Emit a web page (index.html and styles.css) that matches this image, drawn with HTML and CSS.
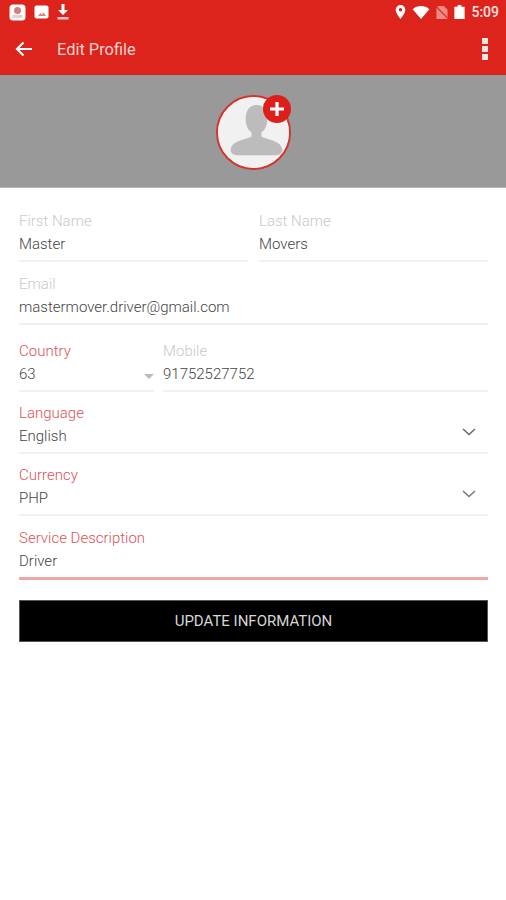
FILE: index.html
```html
<!DOCTYPE html>
<html lang="en">
<head>
  <meta charset="UTF-8" />
  <title>Edit Profile</title>
  <link rel="stylesheet" href="styles.css">
</head>
<body>
  <div class="header">
    <!-- Status bar -->
    <div class="status-bar">
      <div class="status-group">
        <svg class="ic" width="17" height="17" viewBox="0 0 17 17"><rect x="0.5" y="0.5" width="16" height="16" rx="3.5" fill="#fff"/><circle cx="8.500" cy="6.500" r="3.500" fill="#d77c80"/><rect x="3.500" y="11" width="10" height="3" fill="#eccdcf"/></svg>
        <svg class="ic" width="15" height="14" viewBox="0 0 15 14"><rect x="0.5" y="0.5" width="14" height="13" rx="2" fill="#fff"/><path d="M4 11l2.500-3 1.500 1.500 1.500-2 2.500 3.500z" fill="#d9827f"/></svg>
        <svg class="ic" width="12" height="16" viewBox="0 0 12 16"><path d="M4.500 0h3v6H11L6 11 1 6h3.500z" fill="#fff"/><rect x="0.500" y="13" width="11" height="2.500" fill="#f7c9c6"/></svg>
      </div>
      <div class="status-group right">
        <svg class="ic" width="11" height="14" viewBox="0 0 12 16"><path fill-rule="evenodd" d="M6 0a5.500 5.500 0 0 1 5.500 5.500C11.500 9.500 6 16 6 16S.5 9.500.5 5.500A5.500 5.500 0 0 1 6 0zm0 3.500a2 2 0 1 0 0 4 2 2 0 0 0 0-4z" fill="#fff"/></svg>
        <svg class="ic" width="18" height="13" viewBox="0 0 18 14"><path d="M0 3.500C5-1 13-1 18 3.500L9 14z" fill="#fff"/></svg>
        <svg class="ic sim" width="12" height="13" viewBox="0 0 12 14"><path d="M2 0h6l4 4v10H0V2z" fill="#ee8a84"/><path d="M0 1l12 12" stroke="#dc241c" stroke-width="1.200"/></svg>
        <svg class="ic" width="11" height="14" viewBox="0 0 11 15"><path d="M3.500 0h4v2H11v13H0V2h3.500z" fill="#fff"/></svg>
        <span class="clock">5:09</span>
      </div>
    </div>
    <!-- Toolbar -->
    <div class="toolbar">
      <svg class="back" width="18" height="16" viewBox="0 0 18 16"><path d="M17 8H2.500M8.500 1.500L2 8l6.500 6.500" fill="none" stroke="#fff" stroke-width="2.200"/></svg>
      <span class="title">Edit Profile</span>
      <div class="menu"><i></i><i></i><i></i></div>
    </div>
  </div>

  <div class="banner">
    <div class="avatar">
      <svg width="71" height="71" viewBox="0 0 72 72">
        <circle cx="36" cy="36" r="36" fill="#f1f1f1"/>
        <path d="M39 8c-7 0-11 6-11 14 0 6 2 11 6 14v4c-5 3-19 4-21 12-1 4 2 7 6 7h40c4 0 7-3 6-7-2-8-16-9-21-12v-4c4-3 6-8 6-14 0-8-4-14-11-14z" fill="#bcbcbc"/>
      </svg>
      <span class="plus">
        <svg width="16" height="16" viewBox="0 0 16 16"><path d="M8 1v14M1 8h14" stroke="#fff" stroke-width="3.200"/></svg>
      </span>
    </div>
  </div>

  <form class="form">
    <div class="row">
      <div class="field grow">
        <label>First Name</label>
        <div class="value">Master</div>
      </div>
      <div class="field grow">
        <label>Last Name</label>
        <div class="value">Movers</div>
      </div>
    </div>
    <div class="field">
      <label>Email</label>
      <div class="value">mastermover.driver@gmail.com</div>
    </div>
    <div class="row tight phone-row">
      <div class="field country">
        <label class="red">Country</label>
        <div class="value spread">63<span class="caret"></span></div>
      </div>
      <div class="field grow">
        <label>Mobile</label>
        <div class="value">91752527752</div>
      </div>
    </div>
    <div class="field pull-up">
      <label class="red">Language</label>
      <div class="value spread">English
        <svg class="chev" width="14" height="8" viewBox="0 0 14 8"><path d="M1 1l6 5.500L13 1" fill="none" stroke="#666" stroke-width="1.500"/></svg>
      </div>
    </div>
    <div class="field pull-up">
      <label class="red">Currency</label>
      <div class="value spread">PHP
        <svg class="chev" width="14" height="8" viewBox="0 0 14 8"><path d="M1 1l6 5.500L13 1" fill="none" stroke="#777" stroke-width="1.500"/></svg>
      </div>
    </div>
    <div class="field focused">
      <label class="red">Service Description</label>
      <div class="value">Driver</div>
    </div>
    <button class="submit" type="button">UPDATE INFORMATION</button>
  </form>
</body>
</html>
```

FILE: styles.css
```css
/* Reset */
* {
  margin: 0; padding: 0; box-sizing: border-box;
}
html, body {
  height: 100%;
  background: #fff;
  font-family: Roboto, "Liberation Sans", sans-serif;
  overflow: hidden;
}

/* Header */
.header {
  background: #dc241c;
  height: 75px;
  border-bottom: 1px solid #c9261e;
}
.status-bar {
  height: 27px;
  display: flex;
  justify-content: space-between;
  align-items: center;
  padding: 0 7px 3px 9px;
}
.status-group {
  display: flex;
  align-items: center;
  gap: 8px;
}
.status-group.right {
  gap: 6px;
}
.clock {
  color: #fce4e2;
  font-size: 14px;
  font-weight: 500;
}
.toolbar {
  height: 47px;
  display: flex;
  align-items: center;
  padding: 0 18px 3px 15px;
}
.back {
  margin-right: 24px;
}
.title {
  color: #f9d2cf;
  font-size: 16.400px;
  flex: 1;
}
.menu {
  display: flex;
  flex-direction: column;
  gap: 2px;
}
.menu i {
  display: block;
  width: 6px;
  height: 6px;
  background: #fbe3e1;
}

/* Banner with avatar */
.banner {
  height: 113px;
  background: #999;
  border-bottom: 1px solid #b5b5b5;
  display: flex;
  justify-content: center;
  padding-top: 20px;
}
.avatar {
  position: relative;
  width: 75px;
  height: 75px;
  border: 2px solid #d8322b;
  border-radius: 50%;
  background: #f1f1f1;
}
.avatar > svg {
  display: block;
  border-radius: 50%;
}
.plus {
  position: absolute;
  top: -2px;
  right: -2px;
  width: 28px;
  height: 28px;
  border-radius: 50%;
  background: #dc1f1a;
  display: flex;
  align-items: center;
  justify-content: center;
}

/* Form */
.form {
  padding: 24px 18px 0 19px;
  display: flex;
  flex-direction: column;
  gap: 13px;
}
.row {
  display: flex;
  gap: 11px;
}
.row.tight {
  gap: 9px;
}
.phone-row {
  margin-top: 4px;
}
.pull-up {
  margin-top: -1px;
}
.grow {
  flex: 1;
}
.country {
  width: 135px;
}
.field {
  border-bottom: 2px solid #f0f0f0;
  height: 50px;
}
.field label {
  display: block;
  height: 18px;
  line-height: 18px;
  font-size: 15px;
  font-weight: 300;
  color: #c8c8c8;
}
.field label.red {
  color: #dc5257;
}
.value {
  margin-top: 5px;
  height: 18px;
  line-height: 18px;
  font-size: 15px;
  font-weight: 300;
  color: #444;
}
.spread {
  display: flex;
  justify-content: space-between;
  align-items: center;
}
.chev {
  margin: -9px 12px 0 0;
}
.caret {
  width: 0;
  height: 0;
  border-left: 5px solid transparent;
  border-right: 5px solid transparent;
  border-top: 5px solid #bbb;
  margin-top: 4px;
}
.focused {
  border-bottom: 3px solid #efa6a6;
  height: 51px;
}
.submit {
  margin-top: 7px;
  height: 42px;
  border: 1px solid #555;
  background: #000;
  color: #d6d6d6;
  font-family: inherit;
  font-size: 15px;
  font-weight: 400;
}
```
